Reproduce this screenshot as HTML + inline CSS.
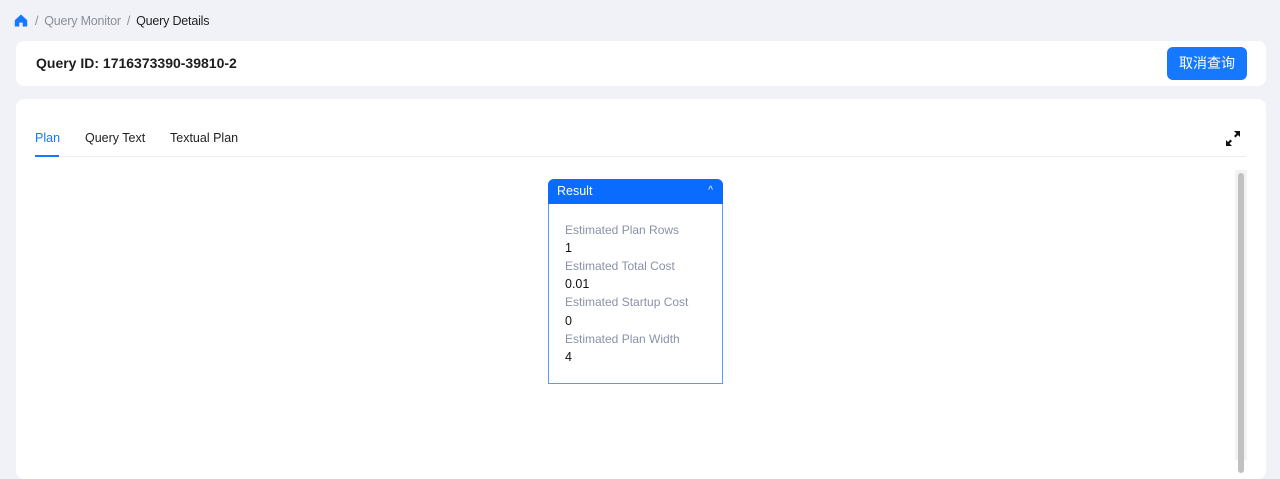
<!DOCTYPE html>
<html><head><meta charset="utf-8"><style>
*{box-sizing:border-box;margin:0;padding:0}
body{width:1280px;height:460px;overflow:hidden;background:#f0f2f7;font-family:"Liberation Sans","Noto Sans CJK SC",sans-serif;position:relative}
.abs{position:absolute}
.bc{top:12px;left:14px;font-size:12.5px;color:#8a8f99;display:flex;align-items:center;height:17px;letter-spacing:-0.2px}
.card{background:#fff;border-radius:8px;left:16px;width:1250px}
.btn{left:1167px;top:47px;width:80px;height:33px;background:#1677ff;border-radius:6px;color:#fff;font-size:14px;text-align:center;line-height:33px}
.tab{top:131px;font-size:12.5px;color:#222}
.lab{left:565px;font-size:12px;color:#8892a8}
.val{left:565px;font-size:12.5px;color:#111}
</style></head><body>
<div class="abs bc"><svg width="14" height="13" viewBox="0 0 14 13"><path d="M7 0.5L0.8 6.2V12.5H5.3V8.6H8.7V12.5H13.2V6.2Z" fill="#1677ff"/></svg>
<span style="margin:0 6px 0 7px">/</span><span>Query Monitor</span><span style="margin:0 6px">/</span><span style="color:#222">Query Details</span></div>
<div class="abs card" style="top:41px;height:45px"></div>
<div class="abs" style="left:36px;top:55px;font-size:14px;font-weight:bold;color:#1d1d1d">Query ID: 1716373390-39810-2</div>
<div class="abs btn">取消查询</div>
<div class="abs card" style="top:99px;height:380px"></div>
<div class="abs tab" style="left:35px;color:#1677ff">Plan</div>
<div class="abs tab" style="left:85px">Query Text</div>
<div class="abs tab" style="left:170px">Textual Plan</div>
<div class="abs" style="left:35px;top:156px;width:1211px;height:1px;background:#eceef2"></div>
<div class="abs" style="left:35px;top:155px;width:24px;height:2px;background:#1677ff"></div>
<svg class="abs" style="left:1225px;top:130px" width="16" height="17" viewBox="0 0 16 17"><path d="M9 1H15V7L13 5L10.5 7.5L9 6L11.5 3.5Z M7 16H1V10L3 12L5.5 9.5L7 11L4.5 13.5Z" fill="#111"/></svg>
<div class="abs" style="left:1235px;top:170px;width:12px;height:290px;background:#f3f3f3"></div>
<div class="abs" style="left:1238px;top:173px;width:6px;height:300px;background:#c1c1c1;border-radius:3px"></div>
<div class="abs" style="left:548px;top:179px;width:175px;height:205px;border:1px solid #5a9bff;border-radius:6px 6px 0 0"></div>
<div class="abs" style="left:548px;top:179px;width:175px;height:25px;background:#0a6cff;border-radius:6px 6px 0 0;color:#fff;font-size:12.5px;line-height:25px;padding-left:9px">Result<span style="position:absolute;right:10px;top:-1px;font-size:10px">^</span></div>
<div class="abs lab" style="top:223px">Estimated Plan Rows</div>
<div class="abs val" style="top:241px">1</div>
<div class="abs lab" style="top:259px">Estimated Total Cost</div>
<div class="abs val" style="top:277px">0.01</div>
<div class="abs lab" style="top:295px">Estimated Startup Cost</div>
<div class="abs val" style="top:314px">0</div>
<div class="abs lab" style="top:332px">Estimated Plan Width</div>
<div class="abs val" style="top:350px">4</div>
</body></html>
